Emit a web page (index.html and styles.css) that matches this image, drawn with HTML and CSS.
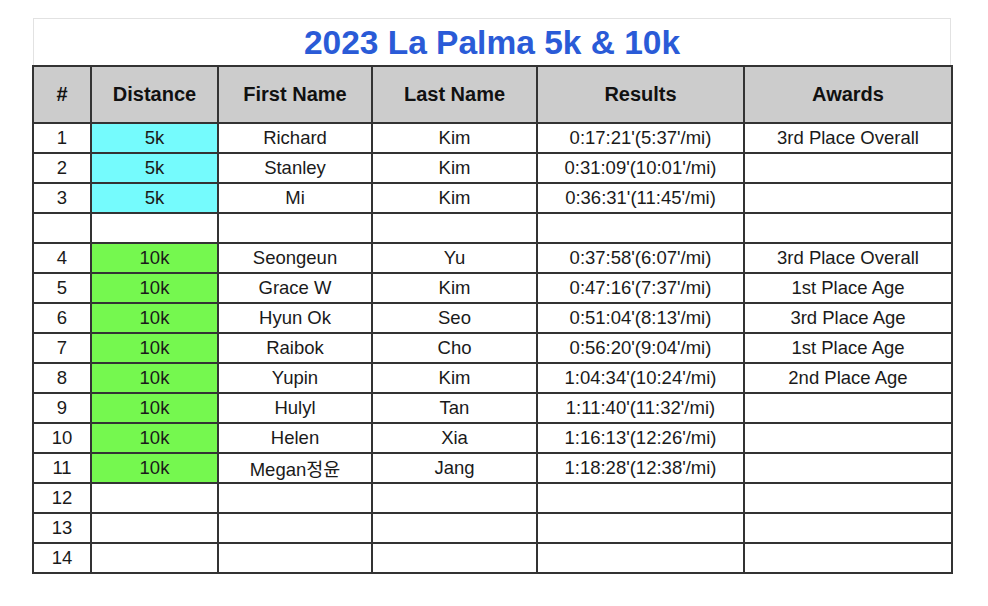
FILE: index.html
```html
<!DOCTYPE html>
<html>
<head>
<meta charset="utf-8">
<link rel="stylesheet" href="styles.css">
</head>
<body>
<div class="sheet">
  <div class="title">2023 La Palma 5k &amp; 10k</div>
  <table class="results">
    <colgroup>
      <col class="c-num"><col class="c-dist"><col class="c-first"><col class="c-last"><col class="c-res"><col class="c-award">
    </colgroup>
    <thead>
      <tr><th>#</th><th>Distance</th><th>First Name</th><th>Last Name</th><th>Results</th><th>Awards</th></tr>
    </thead>
    <tbody>
      <tr><td>1</td><td class="k5">5k</td><td>Richard</td><td>Kim</td><td>0:17:21'(5:37'/mi)</td><td>3rd Place Overall</td></tr>
      <tr><td>2</td><td class="k5">5k</td><td>Stanley</td><td>Kim</td><td>0:31:09'(10:01'/mi)</td><td></td></tr>
      <tr><td>3</td><td class="k5">5k</td><td>Mi</td><td>Kim</td><td>0:36:31'(11:45'/mi)</td><td></td></tr>
      <tr><td></td><td></td><td></td><td></td><td></td><td></td></tr>
      <tr><td>4</td><td class="k10">10k</td><td>Seongeun</td><td>Yu</td><td>0:37:58'(6:07'/mi)</td><td>3rd Place Overall</td></tr>
      <tr><td>5</td><td class="k10">10k</td><td>Grace W</td><td>Kim</td><td>0:47:16'(7:37'/mi)</td><td>1st Place Age</td></tr>
      <tr><td>6</td><td class="k10">10k</td><td>Hyun Ok</td><td>Seo</td><td>0:51:04'(8:13'/mi)</td><td>3rd Place Age</td></tr>
      <tr><td>7</td><td class="k10">10k</td><td>Raibok</td><td>Cho</td><td>0:56:20'(9:04'/mi)</td><td>1st Place Age</td></tr>
      <tr><td>8</td><td class="k10">10k</td><td>Yupin</td><td>Kim</td><td>1:04:34'(10:24'/mi)</td><td>2nd Place Age</td></tr>
      <tr><td>9</td><td class="k10">10k</td><td>Hulyl</td><td>Tan</td><td>1:11:40'(11:32'/mi)</td><td></td></tr>
      <tr><td>10</td><td class="k10">10k</td><td>Helen</td><td>Xia</td><td>1:16:13'(12:26'/mi)</td><td></td></tr>
      <tr><td>11</td><td class="k10">10k</td><td>Megan정윤</td><td>Jang</td><td>1:18:28'(12:38'/mi)</td><td></td></tr>
      <tr><td>12</td><td></td><td></td><td></td><td></td><td></td></tr>
      <tr><td>13</td><td></td><td></td><td></td><td></td><td></td></tr>
      <tr><td>14</td><td></td><td></td><td></td><td></td><td></td></tr>
    </tbody>
  </table>
</div>
</body>
</html>
```

FILE: styles.css
```css
html, body {
  margin: 0;
  padding: 0;
  background: #ffffff;
}
body {
  font-family: "Liberation Sans", Arial, "Noto Sans CJK KR", sans-serif;
  color: #111;
}
.sheet {
  width: 919px;
  margin: 18px 0 0 32px;
}
.title {
  height: 45px;
  margin-left: 1px;
  border: 1px solid #e2e2e2;
  border-bottom: none;
  display: flex;
  align-items: center;
  justify-content: center;
  padding-top: 2px;
  box-sizing: border-box;
  height: 47px;
  font-size: 33.5px;
  font-weight: bold;
  color: #2a5bd7;
}
.results {
  width: 919px;
  border-collapse: collapse;
  table-layout: fixed;
}
.c-num { width: 58px; }
.c-dist { width: 127px; }
.c-first { width: 154px; }
.c-last { width: 165px; }
.c-res { width: 207px; }
.c-award { width: 208px; }
.results th,
.results td {
  border: 2px solid #333;
  text-align: center;
  padding: 0;
  white-space: nowrap;
}
.results th {
  height: 55px;
  background: #cccccc;
  font-size: 20px;
  font-weight: bold;
  color: #111;
}
.results td {
  height: 28px;
  font-size: 18.5px;
  color: #1a1a1a;
}
.results td.k5 { background: #75fbfd; }
.results td.k10 { background: #75f84f; }
```
